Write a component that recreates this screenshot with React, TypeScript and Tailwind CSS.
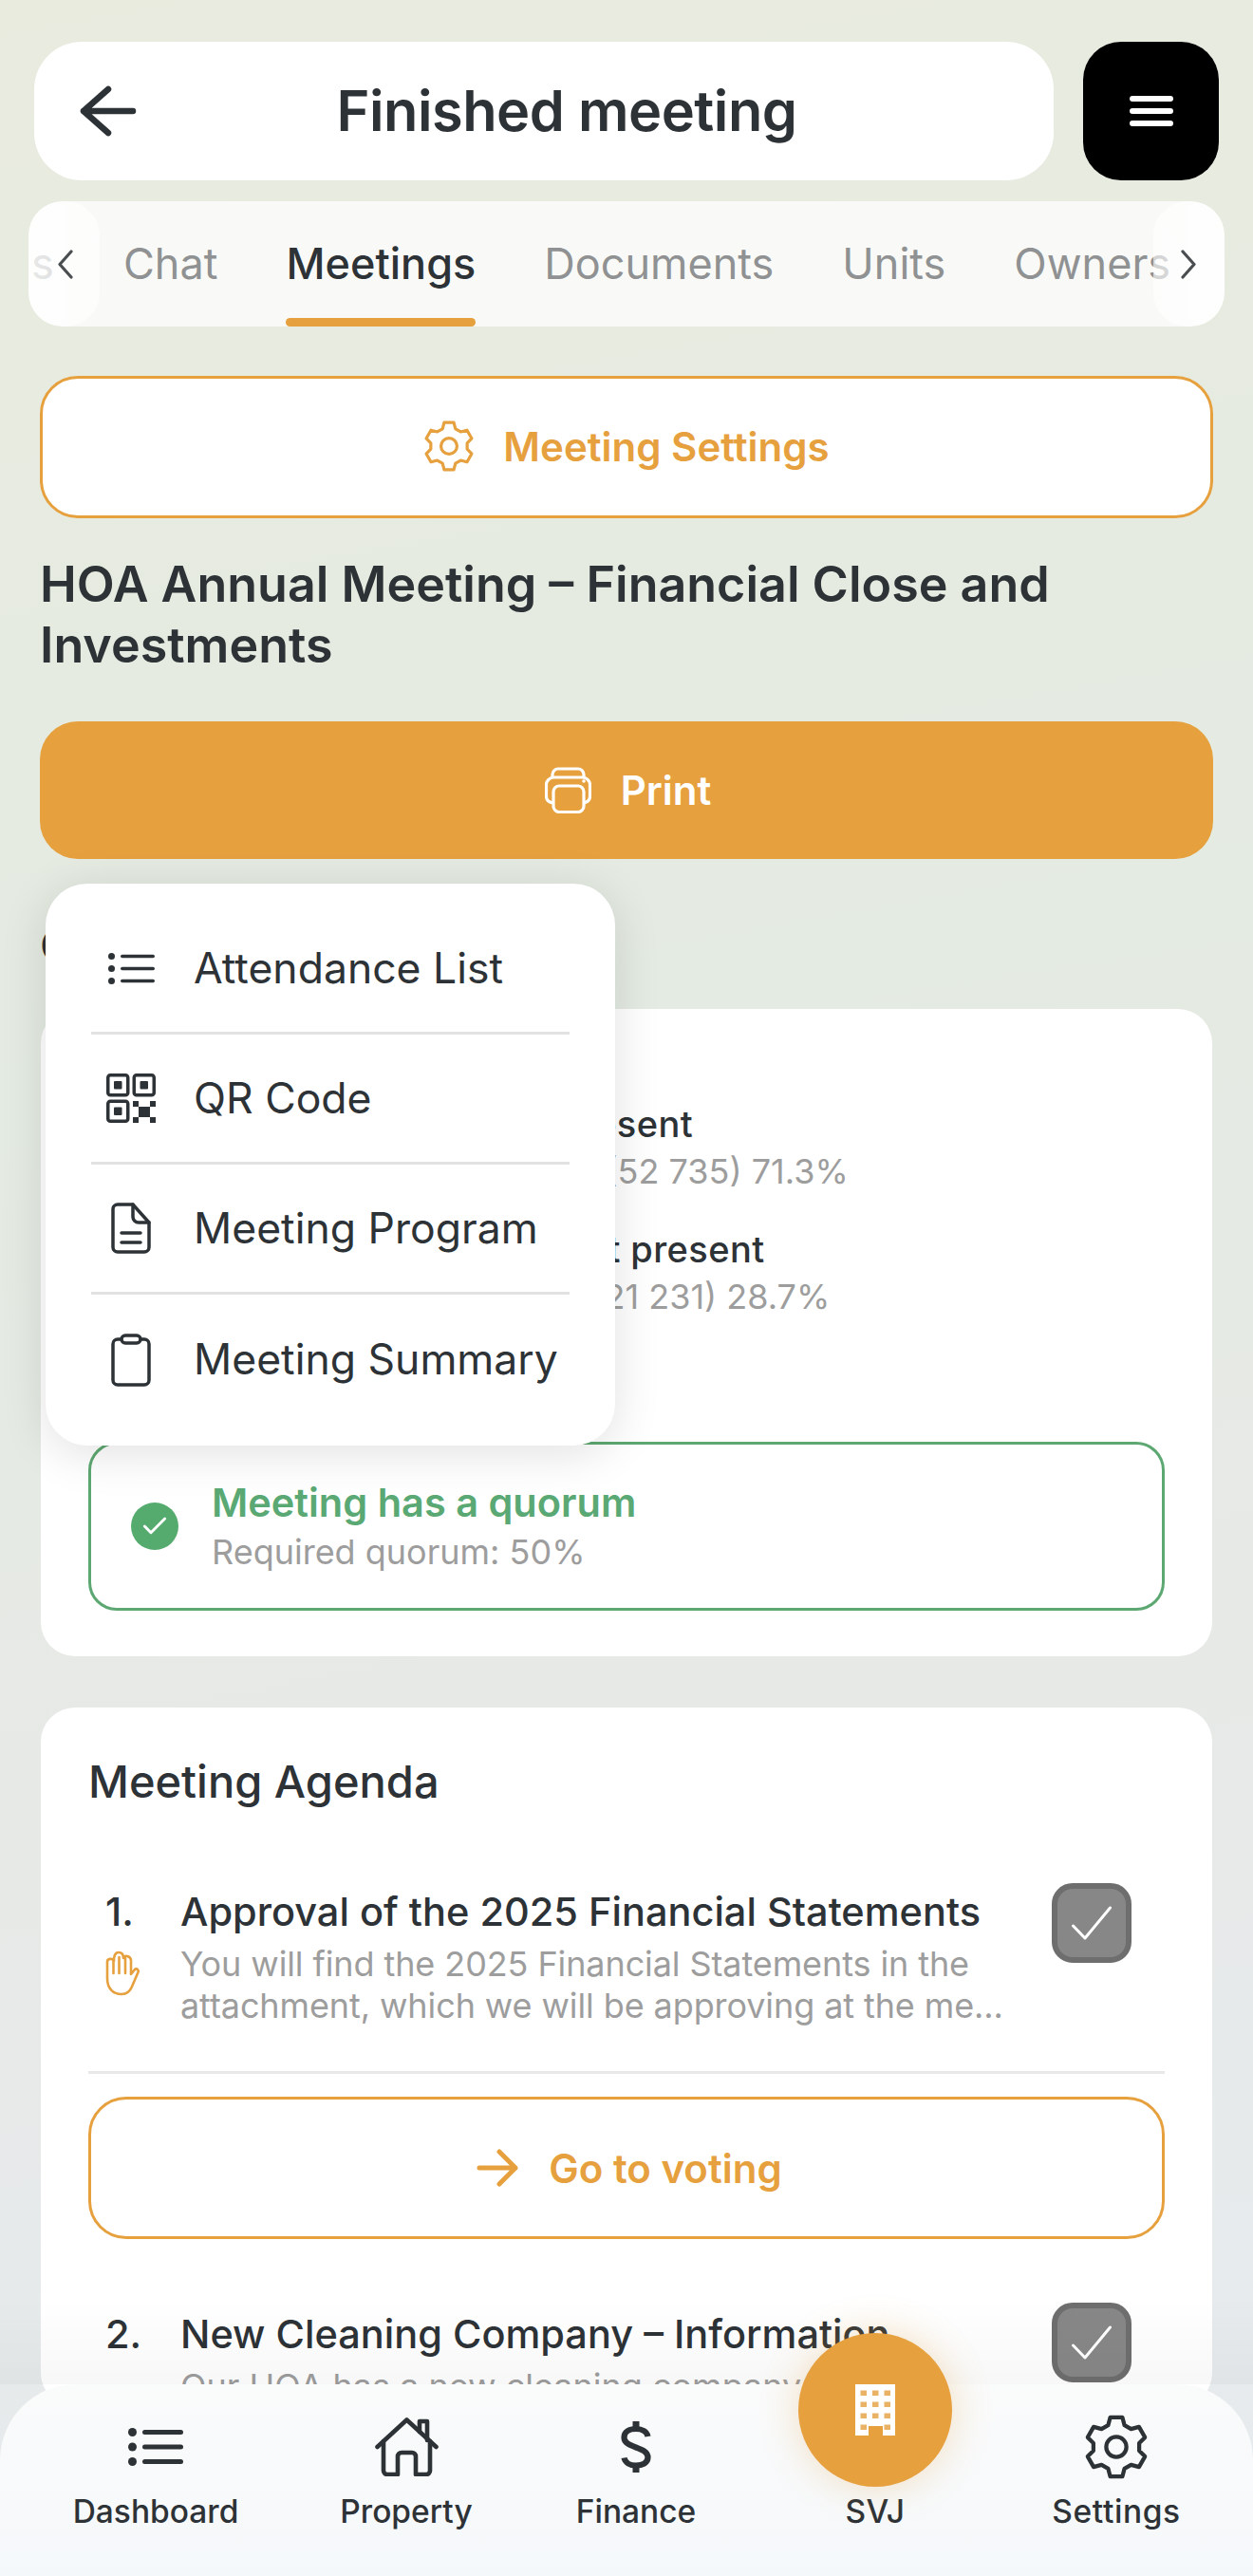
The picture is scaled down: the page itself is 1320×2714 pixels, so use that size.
import { Check } from "lucide-react";

// six tooth gear, same outline for nav and button
function gearPath(R: number, r: number) {
  const pts: string[] = [];
  for (let i = 0; i < 6; i++) {
    const a = (i * Math.PI) / 3 - Math.PI / 2;
    const offsets: [number, number][] = [
      [-0.36, r],
      [-0.2, R],
      [0.2, R],
      [0.36, r],
    ];
    offsets.forEach(([o, rad]) => {
      pts.push(`${(32 + rad * Math.cos(a + o)).toFixed(1)} ${(32 + rad * Math.sin(a + o)).toFixed(1)}`);
    });
  }
  return "M" + pts.join("L") + "Z";
}

function GearIcon({ size, stroke }: { size: number; stroke: number }) {
  return (
    <svg width={size} height={size} viewBox="0 0 64 64" fill="none" stroke="currentColor" strokeWidth={stroke} strokeLinejoin="round">
      <path d={gearPath(30, 23)} />
      <circle cx="32" cy="32" r="10" />
    </svg>
  );
}

function PrintIcon() {
  return (
    <svg width="49" height="49" viewBox="0 0 49 49" fill="none" stroke="currentColor" strokeWidth="3.2">
      <path d="M8 11V8a6 6 0 0 1 6-6h21a6 6 0 0 1 6 6v3" />
      <path d="M8 38c-4-1-6.5-3-6.5-7V19a8 8 0 0 1 8-8h30a8 8 0 0 1 8 8v12c0 4-2.5 6-6.5 7" />
      <rect x="9" y="20" width="32" height="27.5" rx="6" />
      <circle cx="41" cy="15" r="1.8" fill="currentColor" stroke="none" />
    </svg>
  );
}

function ListIcon({ w, h, r, stroke, gap }: { w: number; h: number; r: number; stroke: number; gap: number }) {
  const mid = h / 2;
  return (
    <svg width={w} height={h} viewBox={`0 0 ${w} ${h}`} fill="currentColor" stroke="none">
      {[mid - gap, mid, mid + gap].map((y) => (
        <g key={y}>
          <circle cx={r} cy={y} r={r} />
          <rect x={r * 2 + 6} y={y - stroke / 2} width={w - r * 2 - 6} height={stroke} rx={stroke / 2} />
        </g>
      ))}
    </svg>
  );
}

function QrIcon() {
  return (
    <svg width="52" height="52" viewBox="0 0 52 52" fill="currentColor">
      <g fill="none" stroke="currentColor" strokeWidth="3.5">
        <rect x="1.75" y="1.75" width="21" height="21" rx="2.5" />
        <rect x="29.25" y="1.75" width="21" height="21" rx="2.5" />
        <rect x="1.75" y="29.25" width="21" height="21" rx="2.5" />
      </g>
      <rect x="8" y="8" width="8.5" height="8.5" rx="1" />
      <rect x="35.5" y="8" width="8.5" height="8.5" rx="1" />
      <rect x="8" y="35.5" width="8.5" height="8.5" rx="1" />
      <rect x="28" y="29" width="6" height="6" />
      <rect x="46" y="29" width="6" height="6" />
      <rect x="34" y="35" width="12" height="11" />
      <rect x="28" y="46" width="6" height="6" />
      <rect x="46" y="46" width="6" height="6" />
    </svg>
  );
}

function FileIcon() {
  return (
    <svg width="42" height="54" viewBox="0 0 42 54" fill="none" stroke="currentColor" strokeWidth="3.5" strokeLinecap="round" strokeLinejoin="round">
      <path d="M7 2h16l17 19v26a5 5 0 0 1-5 5H7a5 5 0 0 1-5-5V7a5 5 0 0 1 5-5Z" />
      <path d="M23 2v13a6 6 0 0 0 6 6h11" />
      <path d="M11 32h20M11 42h20" />
    </svg>
  );
}

function ClipboardIcon() {
  return (
    <svg width="42" height="56" viewBox="0 0 42 56" fill="none" stroke="currentColor" strokeWidth="3.5" strokeLinejoin="round">
      <path d="M11 6H7a5 5 0 0 0-5 5v38a5 5 0 0 0 5 5h28a5 5 0 0 0 5-5V11a5 5 0 0 0-5-5h-4" />
      <rect x="11" y="2" width="20" height="8" rx="4" />
    </svg>
  );
}

function HomeIcon() {
  return (
    <svg width="67" height="62" viewBox="0 0 67 62" fill="none" stroke="currentColor" strokeWidth="4.6" strokeLinejoin="round" strokeLinecap="round">
      <path d="M2.5 31 33.5 2.5 64.5 31" />
      <path d="M47 15V4h8v20" />
      <path d="M9 25v31a4 4 0 0 0 4 4h11V41a4 4 0 0 1 4-4h11a4 4 0 0 1 4 4v19h11a4 4 0 0 0 4-4V25" />
    </svg>
  );
}

function DollarIcon() {
  return (
    <svg width="32" height="54" viewBox="0 0 32 54" fill="none" stroke="currentColor" strokeWidth="6.2">
      <path d="M12.5 0h7v8h-7zM12.5 46h7v8h-7z" fill="currentColor" stroke="none" />
      <path d="M28.5 16c-1-5-6-8-12.5-8C9 8 3.5 11 3.5 17c0 6 6 8 12.5 10.5s12.5 4.5 12.5 10.5c0 6-6 8.5-12.5 8.5-6.5 0-11.5-3-12.5-8" />
    </svg>
  );
}

function BuildingIcon() {
  return (
    <svg width="42" height="54" viewBox="0 0 42 54">
      <path d="M0 0h42v54H29V44H14v10H0Z" fill="#fff" />
      <g fill="#e6a03e" opacity="0.8">
        {[6.5, 18.5, 30.5].map((y) =>
          [5.5, 18, 30.5].map((x) => <rect key={`${x}-${y}`} x={x} y={y} width="6.5" height="5.5" />),
        )}
        <rect x="5.5" y="42.5" width="6.5" height="5.5" />
        <rect x="30.5" y="42.5" width="6.5" height="5.5" />
      </g>
    </svg>
  );
}

function HandIcon() {
  return (
    <svg width="36" height="48" viewBox="0 0 36 48" fill="none" stroke="currentColor" strokeWidth="2.6" strokeLinecap="round" strokeLinejoin="round">
      <path d="M2 29V12C2 8 8 8 9 11c0-5 1-9 5-9s5 3 5 6c1-3 7-3 8 2v15l4-5c2-2 5 1 3 4l-6 14c-2 5-6 8-11 8C8 46 2 40 2 29Z" />
      <path d="M8.5 11v13M14.5 7v17M21 8v16" />
    </svg>
  );
}

function Checkbox() {
  return (
    <div className="flex h-[84px] w-[84px] shrink-0 items-center justify-center rounded-[22px] border-[6px] border-[#6e6e6e] bg-[#878787] text-white">
      <svg width="42" height="36" viewBox="0 0 42 36" fill="none" stroke="currentColor" strokeWidth="3" strokeLinecap="round" strokeLinejoin="round">
        <path d="M1.5 21 14 34 40.5 2" />
      </svg>
    </div>
  );
}

const menuItems = [
  { label: "Attendance List", icon: <ListIcon w={49} h={33} r={3.5} stroke={3.5} gap={13} /> },
  { label: "QR Code", icon: <QrIcon /> },
  { label: "Meeting Program", icon: <FileIcon /> },
  { label: "Meeting Summary", icon: <ClipboardIcon /> },
];

const navItems = [
  { label: "Dashboard", icon: <ListIcon w={58} h={40} r={4.5} stroke={5} gap={15.5} />, spaced: false },
  { label: "Property", icon: <HomeIcon />, spaced: false },
  { label: "Finance", icon: <DollarIcon />, spaced: false },
  { label: "SVJ", icon: null, spaced: true },
  { label: "Settings", icon: <GearIcon size={68} stroke={4} />, spaced: true },
];

export default function App() {
  return (
    <div className="relative h-[2714px] w-[1320px] overflow-hidden bg-[linear-gradient(170deg,#e9ebdf_0%,#e4ebe2_40%,#e7e9e6_65%,#e6ebef_100%)] font-['Inter',sans-serif] text-[#2d3236]">
      {/* top bar */}
      <div className="flex gap-[31px] px-[36px] pt-[44px]">
        <div className="relative flex h-[146px] w-[1074px] items-center justify-center rounded-[50px] bg-white pl-[48px]">
          <svg width="60" height="54" viewBox="0 0 60 54" fill="none" stroke="currentColor" strokeWidth="6.5" strokeLinecap="round" strokeLinejoin="round" className="absolute left-[48px]">
            <path d="M30 4 4 27l26 23M4 27h52" />
          </svg>
          <h1 className="text-[59.5px] font-semibold tracking-[-0.5px]">Finished meeting</h1>
        </div>
        <div className="flex h-[146px] w-[143px] items-center justify-center rounded-[40px] bg-black">
          <div className="flex w-[46px] flex-col gap-[7px]">
            <div className="h-[6px] rounded-full bg-white" />
            <div className="h-[6px] rounded-full bg-white" />
            <div className="h-[6px] rounded-full bg-white" />
          </div>
        </div>
      </div>

      {/* tabs */}
      <div className="relative mx-[30px] mt-[22px] flex h-[132px] items-center overflow-hidden rounded-[36px] bg-white/75 text-[45px] text-[#8f9192]">
        <span className="absolute left-[3px]">s</span>
        <div className="ml-[100px] flex gap-[72px] whitespace-nowrap">
          <span>Chat</span>
          <span className="relative font-medium text-[#2d3236]">
            Meetings
            <span className="absolute -bottom-[32px] left-0 h-[9px] w-full rounded-full bg-[#e6a03e]" />
          </span>
          <span>Documents</span>
          <span>Units</span>
          <span>Owners</span>
        </div>
        <div className="absolute inset-y-0 left-0 w-[75px] rounded-[36px] bg-gradient-to-r from-white/80 to-white/60" />
        <div className="absolute inset-y-0 right-0 w-[75px] rounded-[36px] bg-gradient-to-l from-white/80 to-white/60" />
        <svg width="16" height="31" viewBox="0 0 16 31" fill="none" stroke="#4a4e51" strokeWidth="3.2" strokeLinecap="round" strokeLinejoin="round" className="absolute left-[31px]">
          <path d="M14 2 2 15.5 14 29" />
        </svg>
        <svg width="16" height="31" viewBox="0 0 16 31" fill="none" stroke="#4a4e51" strokeWidth="3.2" strokeLinecap="round" strokeLinejoin="round" className="absolute right-[30px]">
          <path d="m2 2 12 13.5L2 29" />
        </svg>
      </div>

      {/* main content */}
      <div className="px-[42px] pt-[52px]">
        <button className="flex h-[150px] w-full items-center justify-center gap-[30px] rounded-[40px] border-[3px] border-[#e6a03e] bg-white pb-[2px] text-[42px] font-semibold text-[#e6a03e]">
          <GearIcon size={54} stroke={3.8} />
          Meeting Settings
        </button>

        <h2 className="mt-[38px] text-[52px] leading-[64px] font-semibold">HOA Annual Meeting – Financial Close and Investments</h2>

        <button className="mt-[48px] flex h-[145px] w-full items-center justify-center gap-[31px] rounded-[40px] bg-[#e6a03e] pl-[3px] text-[42px] font-semibold text-white">
          <PrintIcon />
          Print
        </button>

        <div className="mt-[63px] text-[46px] leading-[56px] font-medium">Quorum</div>

        {/* attendance card */}
        <div className="mx-px mt-[39px] h-[682px] rounded-[36px] bg-white px-[50px] pt-[96px]">
          <div className="flex h-[308px] gap-[60px]">
            <svg width="320" height="320" viewBox="0 0 36 36" className="ml-[130px] shrink-0">
              <circle cx="18" cy="18" r="15" fill="none" stroke="#e5e7eb" strokeWidth="5" />
            </svg>
            <div className="-ml-[15px] flex flex-col gap-[33px] whitespace-nowrap">
              <div>
                <div className="text-[38px] leading-[50px] font-medium tracking-[0.4px]">Present</div>
                <div className="mt-px ml-[2px] text-[36px] leading-[48px] text-[#9d9d9d]">10 (52 735) 71.3%</div>
              </div>
              <div>
                <div className="text-[38px] leading-[50px] font-medium tracking-[0.4px]">Not present</div>
                <div className="mt-px ml-[2px] text-[36px] leading-[48px] text-[#9d9d9d]">4 (21 231) 28.7%</div>
              </div>
            </div>
          </div>
          <div className="mt-[52px] flex h-[178px] items-center gap-[35px] rounded-[30px] border-[3px] border-[#5da872] px-[42px]">
            <div className="flex h-[50px] w-[50px] items-center justify-center rounded-full bg-[#55ab6e] text-white">
              <Check size={32} strokeWidth={2.2} />
            </div>
            <div>
              <div className="text-[41.5px] leading-[52px] font-semibold text-[#5aa974]">Meeting has a quorum</div>
              <div className="mt-px text-[36px] leading-[50px] text-[#9d9d9d]">Required quorum: 50%</div>
            </div>
          </div>
        </div>

        {/* agenda card */}
        <div className="mx-px mt-[54px] rounded-[36px] bg-white px-[50px] pt-[50px]">
          <h3 className="text-[47px] leading-[56px] font-medium">Meeting Agenda</h3>

          <div className="mt-[82px] flex">
            <div className="w-[97px] shrink-0 pl-[18px]">
              <div className="text-[41.5px] leading-[54px] font-medium">1.</div>
              <div className="mt-[14px] text-[#e6a03e]">
                <HandIcon />
              </div>
            </div>
            <div className="w-[870px] whitespace-nowrap">
              <div className="text-[41.5px] leading-[54px] font-medium">Approval of the 2025 Financial Statements</div>
              <div className="mt-[6px] text-[36px] leading-[44px] tracking-[-0.1px] text-[#9d9d9d]">
                <div>You will find the 2025 Financial Statements in the</div>
                <div>attachment, which we will be approving at the me...</div>
              </div>
            </div>
            <div className="-mt-[3px] ml-[48px]">
              <Checkbox />
            </div>
          </div>

          <div className="mt-[47px] h-[3px] bg-[#e8e8e8]" />

          <button className="mt-[24px] flex h-[150px] w-full items-center justify-center gap-[32px] rounded-[40px] border-[3px] border-[#e6a03e] pl-[6px] text-[42px] font-semibold text-[#e6a03e]">
            <svg width="44" height="40" viewBox="0 0 44 40" fill="none" stroke="currentColor" strokeWidth="5" strokeLinecap="round" strokeLinejoin="round">
              <path d="M3 20h38M24 3l17 17-17 17" />
            </svg>
            Go to voting
          </button>

          <div className="mt-[73px] flex">
            <div className="w-[97px] shrink-0 pl-[18px] text-[41.5px] leading-[54px] font-medium">2.</div>
            <div className="w-[870px] whitespace-nowrap">
              <div className="text-[41.5px] leading-[54px] font-medium">New Cleaning Company – Information</div>
              <div className="mt-[6px] text-[36px] leading-[44px] text-[#9d9d9d]">Our HOA has a new cleaning company...</div>
            </div>
            <div className="-mt-[6px] ml-[48px]">
              <Checkbox />
            </div>
          </div>
        </div>
      </div>

      {/* popover menu */}
      <div className="absolute top-[931px] left-[48px] w-[600px] rounded-[44px] bg-white px-[48px] py-[22px] shadow-[0_8px_50px_rgba(0,0,0,0.12)]">
        {menuItems.map((item, i) => (
          <div key={item.label} className={`flex h-[137px] items-center gap-[24px] ${i < menuItems.length - 1 ? "border-b-[3px] border-[#e2e2e2]" : ""}`}>
            <div className="flex w-[84px] items-center justify-center">{item.icon}</div>
            <span className="text-[44.5px] whitespace-nowrap">{item.label}</span>
          </div>
        ))}
      </div>

      {/* bottom nav */}
      <div className="absolute inset-x-0 bottom-[202px] h-[90px] bg-gradient-to-b from-black/0 to-black/[0.03]" />
      <div className="absolute inset-x-0 bottom-0 grid h-[202px] grid-cols-[328px_200px_284px_220px_288px] rounded-t-[80px] bg-gradient-to-b from-[#fafbfb] to-[#f5f8fa] pt-[28px]">
        {navItems.map((item) => (
          <div key={item.label} className="flex flex-col items-center">
            <div className="flex h-[76px] items-center justify-center">{item.icon}</div>
            <span className={`mt-[10px] text-[33.5px] leading-[40px] font-medium ${item.spaced ? "tracking-[0.6px]" : ""}`}>{item.label}</span>
          </div>
        ))}
      </div>

      <div className="absolute top-[2458px] left-[841px] flex h-[162px] w-[162px] items-center justify-center rounded-full bg-[#e6a03e] shadow-[0_0_40px_rgba(230,160,62,0.3)]">
        <BuildingIcon />
      </div>
    </div>
  );
}
